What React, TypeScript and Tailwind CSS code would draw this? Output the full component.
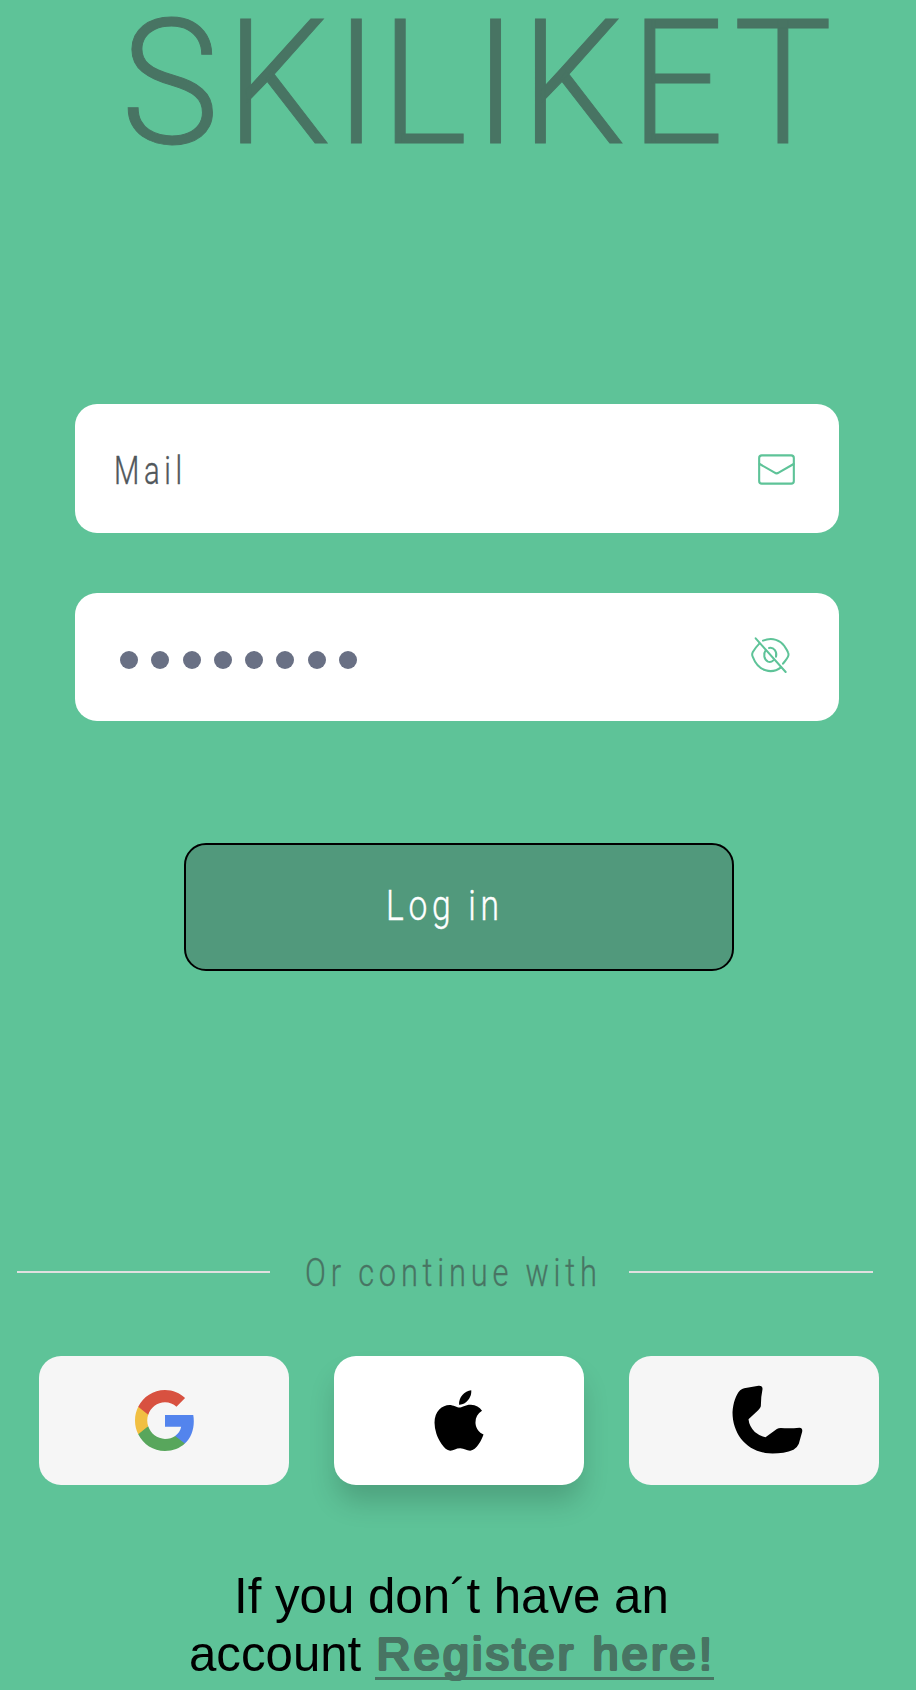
import { FaApple } from "react-icons/fa";

function MailIcon() {
  return (
    <svg className="mt-[2px] h-[31px] w-[37px] shrink-0" viewBox="115 71 111 93" fill="none" stroke="#5ec398" strokeWidth="6.3" strokeLinecap="round">
      <rect x="118.5" y="75" width="104" height="85" rx="8" />
      <path d="M120 101 L165 127 Q171 131 177 127 L222 101" />
    </svg>
  );
}

function EyeOffIcon() {
  return (
    <svg className="mb-[3px] h-9 w-[39px] shrink-0" viewBox="95 621 117 108" fill="none" stroke="#5ec398" strokeWidth="6" strokeLinecap="round">
      <path d="M109 625 L199 726" />
      <path d="M131 632 C160 620 184 632 195 648 C199 655 204 661 206 667 Q209 674 206 680 C202 689 196 694 191 701" />
      <path d="M120 641 C112 649 105 658 100 667 Q97 674 100 680 C108 701 122 716 139 721 C155 726 172 722 185 712" />
      <path d="M149 654 C164 651 174 665 170 680" />
      <path d="M139 661 C131 671 134 689 146 695 C151 697 157 696 162 691" />
    </svg>
  );
}

function GoogleIcon() {
  return (
    <svg className="h-[61px] w-[60px]" viewBox="1 1 22 22" preserveAspectRatio="none">
      <path fill="#5384ed" d="M22.56 12.25c0-.78-.07-1.53-.2-2.25H12v4.26h5.92c-.26 1.37-1.04 2.53-2.21 3.31v2.77h3.57c2.08-1.92 3.28-4.74 3.28-8.09z" />
      <path fill="#58a65c" d="M12 23c2.97 0 5.46-.98 7.28-2.66l-3.57-2.77c-.98.66-2.23 1.06-3.71 1.06-2.86 0-5.29-1.93-6.16-4.53H2.18v2.84C3.99 20.53 7.7 23 12 23z" />
      <path fill="#f1bf42" d="M5.84 14.09c-.22-.66-.35-1.36-.35-2.09s.13-1.43.35-2.09V7.07H2.18C1.43 8.55 1 10.22 1 12s.43 3.45 1.18 4.93l2.85-2.22.81-.62z" />
      <path fill="#d85140" d="M12 5.38c1.62 0 3.06.56 4.21 1.64l3.15-3.15C17.45 2.09 14.97 1 12 1 7.7 1 3.99 3.47 2.18 7.07l3.66 2.84c.87-2.6 3.3-4.53 6.16-4.53z" />
    </svg>
  );
}

function PhoneIcon() {
  return (
    <svg className="h-[69px] w-[71px]" viewBox="366 136 212 207">
      <path d="M402 146 L445 138 Q458 137 457 149 Q452 172 452 200 Q450 207 444 212 L415 239 Q417 260 434 277 Q450 290 466 293 L500 268 Q505 265 512 265 Q540 267 568 264 Q578 265 576 276 L566 312 Q561 324 550 330 C525 341 490 343 465 340 C405 330 367 280 367 218 C369 190 377 165 390 152 Q396 147 402 146Z" />
    </svg>
  );
}

const dots = [0, 1, 2, 3, 4, 5, 6, 7];

export default function App() {
  return (
    <main className="flex h-[1690px] w-[916px] flex-col overflow-hidden bg-[#5ec398] font-['Roboto',sans-serif] font-light">
      <h1 className="ml-[120.5px] h-[166px] w-fit origin-left scale-x-95 text-[174px] leading-[167px] font-light whitespace-nowrap text-[#487463] [-webkit-text-stroke:1px_#487463]">
        <span className="tracking-[7.1px]">S</span>
        <span className="tracking-[4.3px]">K</span>
        <span className="tracking-[2px]">I</span>
        <span className="tracking-[6.5px]">L</span>
        <span className="tracking-[3.1px]">I</span>
        <span className="tracking-[5.4px]">K</span>
        <span className="tracking-[10px]">E</span>
        <span>T</span>
      </h1>

      <div className="mt-[238px] ml-[75px] flex w-[764px] flex-col gap-[60px]">
        <div className="flex h-[128.5px] items-center justify-between rounded-[22px] bg-white pr-[44px] pl-[39px]">
          <span className="mt-[7px] origin-left scale-x-[0.77] text-[38px] tracking-[6px] text-[#50575b] [-webkit-text-stroke:0.4px_#50575b]">Mail</span>
          <MailIcon />
        </div>
        <div className="flex h-[128.5px] items-center justify-between rounded-[22px] bg-white pr-[49px] pl-[45px]">
          <div className="mt-[6px] flex gap-[13.3px]">
            {dots.map((i) => (
              <span key={i} className="size-[18px] rounded-full bg-[#697084]" />
            ))}
          </div>
          <EyeOffIcon />
        </div>
      </div>

      <button className="mt-[122px] ml-[184px] flex h-32 w-[550px] items-center rounded-[22px] border-2 border-black bg-[#51997c] pb-1 pl-[200px] text-[42px] text-white">
        <span className="origin-left scale-x-80 tracking-[5.9px] whitespace-nowrap [-webkit-text-stroke:0.4px_white]">Log in</span>
      </button>

      <div className="mt-[271px] ml-[17px] flex h-[60px] items-center">
        <div className="h-[2px] w-[253px] bg-[#e0e0e0]" />
        <div className="w-[359px] pt-[1px] pl-[35px]">
          <span className="block origin-left scale-x-80 text-[38.5px] tracking-[6px] whitespace-nowrap text-[#487463] [-webkit-text-stroke:0.3px_#487463]">Or continue with</span>
        </div>
        <div className="h-[2px] w-[244px] bg-[#e0e0e0]" />
      </div>

      <div className="mt-[54px] ml-[38.5px] flex gap-[45.4px]">
        <button className="flex h-[128.5px] w-[250px] items-center rounded-[22px] bg-[#f6f6f6] pl-[96px]"><GoogleIcon /></button>
        <button className="flex h-[128.5px] w-[250px] items-center rounded-[22px] bg-white pl-[100px] shadow-[0_19px_28px_-3px_rgba(0,0,0,0.18)]">
          <FaApple className="h-[69px] w-[50px]" preserveAspectRatio="none" />
        </button>
        <button className="flex h-[128.5px] w-[250px] items-center rounded-[22px] bg-[#f6f6f6] pb-[1px] pl-[102.5px]"><PhoneIcon /></button>
      </div>

      <p className="mt-[82px] ml-[189px] w-[525px] font-['Liberation_Sans',sans-serif] text-[49.2px] leading-[58px] font-normal whitespace-nowrap text-black">
        <span className="block pl-[45px]">If you don´t have an</span>
        <span className="flex justify-between">
          account
          <a className="h-[55px] w-[339px] border-b-[3px] border-[#487463] pl-[1.5px] text-[47px] tracking-[3.1px] text-[#487463] [text-shadow:1.4px_0_#487463,-1.4px_0_#487463,0_1.4px_#487463,0_-1.4px_#487463,1px_1px_#487463,-1px_1px_#487463,1px_-1px_#487463,-1px_-1px_#487463]">Register here!</a>
        </span>
      </p>
    </main>
  );
}
